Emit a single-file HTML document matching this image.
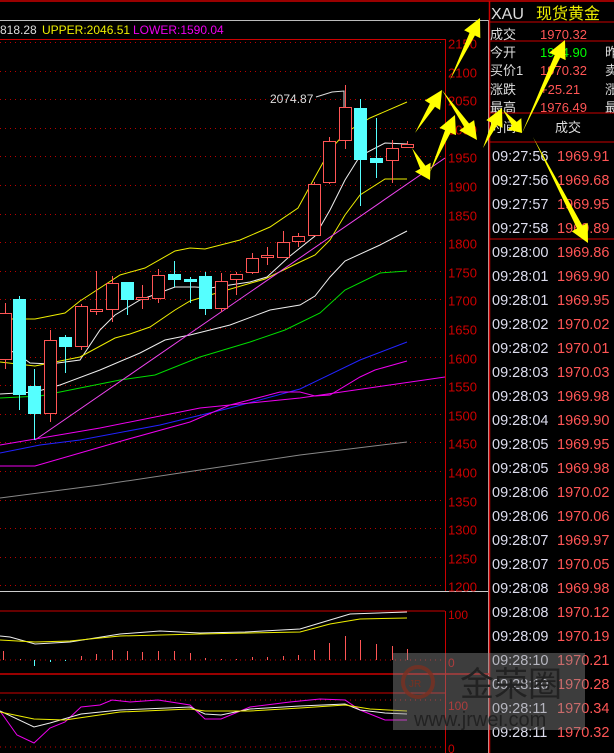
<!DOCTYPE html>
<html><head><meta charset="utf-8"><style>
html,body{margin:0;padding:0;background:#000;width:614px;height:753px;overflow:hidden}
svg{display:block}
text{font-family:"Liberation Sans","Noto Sans CJK SC",sans-serif}
</style></head><body>
<svg id="s" width="614" height="753" xmlns="http://www.w3.org/2000/svg">
<rect width="614" height="753" fill="#000"/>
<line x1="0" y1="1" x2="614" y2="1" stroke="#c00" stroke-width="1.5"/>
<line x1="0" y1="20.5" x2="488" y2="20.5" stroke="#bbb"/>
<line x1="488.5" y1="20" x2="488.5" y2="753" stroke="#bbb"/>
<line x1="0" y1="39.5" x2="445" y2="39.5" stroke="#c00"/>
<text x="0" y="34" font-size="12" fill="#ddd">818.28</text>
<text x="42" y="34" font-size="12" fill="#ee0">UPPER:2046.51</text>
<text x="133" y="34" font-size="12" fill="#e0e">LOWER:1590.04</text>
<line x1="445.5" y1="39" x2="445.5" y2="591" stroke="#c00"/>
<line x1="0" y1="591.5" x2="488" y2="591.5" stroke="#ccc"/>
<g id="grid"></g>
<g id="lines" fill="none" stroke-width="1"></g>
<g id="candles"></g>
<text x="270" y="103" font-size="12" fill="#ddd">2074.87</text>
<polyline points="316,97 332,92 344,91 344,107" fill="none" stroke="#ddd"/>
<line x1="0" y1="611" x2="445" y2="611" stroke="#c00"/>
<line x1="0" y1="674" x2="489" y2="674" stroke="#c00" stroke-width="1.5"/>
<line x1="0" y1="693" x2="445" y2="693" stroke="#c00"/>
<line x1="445.5" y1="611" x2="445.5" y2="753" stroke="#c00"/>
<line x1="0" y1="660" x2="445" y2="660" stroke="#c00" stroke-dasharray="1,4"/>
<line x1="0" y1="700" x2="445" y2="700" stroke="#c00" stroke-dasharray="1,4"/>
<line x1="0" y1="747" x2="445" y2="747" stroke="#c00" stroke-dasharray="1,4"/>
<text x="448" y="619" font-size="12" fill="#c00">100</text>
<text x="448" y="667" font-size="12" fill="#c00">0</text>
<text x="448" y="710" font-size="12" fill="#c00">100</text>
<text x="448" y="753" font-size="12" fill="#c00">0</text>
<g id="low" fill="none"></g>
<line x1="489.5" y1="1" x2="489.5" y2="753" stroke="#c00" stroke-width="1.5"/>
<text x="491" y="19" font-size="16" fill="#ddd">XAU</text>
<text x="536" y="19" font-size="16" fill="#ee0">现货黄金</text>
<line x1="489" y1="22" x2="614" y2="22" stroke="#c00"/>
<text x="490" y="39" font-size="13" fill="#ddd">成交</text>
<text x="540" y="39" font-size="13" fill="#f55">1970.32</text>
<line x1="489" y1="41" x2="614" y2="41" stroke="#c00"/>
<text x="490" y="57" font-size="13" fill="#ddd">今开</text>
<text x="540" y="57" font-size="13" fill="#0f0">1944.90</text>
<text x="605" y="57" font-size="13" fill="#ddd">昨</text>
<text x="490" y="75" font-size="13" fill="#ddd">买价1</text>
<text x="540" y="75" font-size="13" fill="#f55">1970.32</text>
<text x="605" y="75" font-size="13" fill="#ddd">卖</text>
<text x="490" y="94" font-size="13" fill="#ddd">涨跌</text>
<text x="540" y="94" font-size="13" fill="#f55">+25.21</text>
<text x="605" y="94" font-size="13" fill="#ddd">涨</text>
<text x="490" y="112" font-size="13" fill="#ddd">最高</text>
<text x="540" y="112" font-size="13" fill="#f55">1976.49</text>
<text x="605" y="112" font-size="13" fill="#ddd">最</text>
<line x1="489" y1="113" x2="614" y2="113" stroke="#c00"/>
<text x="490" y="132" font-size="13" fill="#ddd">时间</text>
<text x="555" y="132" font-size="13" fill="#ddd">成交</text>
<line x1="489" y1="142" x2="614" y2="142" stroke="#c00"/>
<line x1="489" y1="239" x2="614" y2="239" stroke="#c00"/>
<g id="ticks"></g>
<rect x="393" y="653" width="192" height="77" fill="#888" opacity="0.45"/>
<circle cx="418" cy="682" r="15" fill="none" stroke="#7a3020" stroke-width="4" opacity="0.8"/>
<text x="409" y="687" font-size="10" fill="#7a3020">JR</text>
<text x="460" y="696" font-size="34" fill="#222" font-family="Noto Sans CJK SC,sans-serif">金荣圈</text>
<text x="414" y="726" font-size="20" fill="#222">www.jrwei.com</text>
<g id="arrows" fill="#ff0"></g>
</svg>
<script>
var NS="http://www.w3.org/2000/svg";
function el(p,t,a){var e=document.createElementNS(NS,t);for(var k in a)e.setAttribute(k,a[k]);document.getElementById(p).appendChild(e);return e;}
function Y(v){return 185+(1900-v)*0.572;}
for(var v=2150;v>=1200;v-=50){var y=Math.round(Y(v))+0.5;el("grid","line",{x1:0,y1:y,x2:445,y2:y,stroke:"#b00","stroke-dasharray":"1,4"});
var t=el("grid","text",{x:448,y:y+6,"font-size":13,fill:"#c00"});t.textContent=v;}
function pl(g,pts,c,w){el(g,"polyline",{points:pts,stroke:c,"stroke-width":w||1,fill:"none"});}
pl("lines","0,319 35,319 65,313 80,301 120,275 145,268 175,251 190,248 205,249 240,240 270,227 298,208 315,177 330,150 345,133 370,118 407,102","#ee0");
pl("lines","0,350 15,352 30,363 50,364 80,360 100,330 115,315 140,300 175,287 195,287 210,288 250,282 267,277 290,256 315,236 330,210 345,180 360,156 385,143 407,144","#eee");
pl("lines","0,362 35,366 80,357 115,338 130,334 150,327 175,310 190,301 210,295 265,279 300,262 315,255 330,240 345,215 360,195 385,179 407,179","#ee0");
pl("lines","0,394 35,392 60,385 100,370 140,353 165,340 190,335 230,325 270,310 300,305 315,296 330,277 345,261 380,245 407,231","#eee");
pl("lines","0,398 40,396 80,388 120,380 155,375 200,357 250,342 285,330 320,313 345,290 380,273 407,271","#0d0");
pl("lines","0,453 40,445 80,440 160,425 230,408 300,389 360,360 407,342","#22f");
pl("lines","35,440 445,158","#e4e");
pl("lines","0,466 35,466 125,440 190,422 230,405 265,396 280,392 300,392 315,396 330,395 360,377 375,370 407,361","#e0e");
pl("lines","0,445 100,428 200,408 300,398 445,377","#e0e");
pl("lines","0,498 100,485 200,470 300,455 407,442","#888");
var C=[[5,313,359,303,369,1],[19,299,394,296,410,0],[34,386,413,369,440,0],[50,340,413,330,422,1],[65,337,346,335,373,0],[81,306,346,304,350,1],[96,309,311,271,315,1],[112,283,309,276,322,1],[127,282,299,282,315,0],[142,297,299,285,309,1],[158,275,298,269,303,1],[174,274,279,261,287,0],[190,279,281,277,303,0],[205,276,308,272,315,0],[221,281,308,273,312,1],[236,274,279,272,295,1],[252,258,272,253,274,1],[267,255,257,247,265,1],[283,242,257,231,258,1],[298,236,241,233,247,1],[314,184,235,182,235,1],[329,141,182,137,184,1],[345,107,140,85,149,1],[360,108,159,99,206,0],[376,158,162,118,178,0],[392,148,160,140,183,1],[407,144,147,141,147,1]];
C.forEach(function(c){var col=c[5]?"#f55":"#5ff";el("candles","line",{x1:c[0]+.5,y1:c[3],x2:c[0]+.5,y2:c[4],stroke:col});
var h=Math.max(c[2]-c[1],1);
if(c[5])el("candles","rect",{x:c[0]-5.5,y:c[1]+.5,width:12,height:h,fill:"#000",stroke:col});
else el("candles","rect",{x:c[0]-6,y:c[1],width:13,height:h+1,fill:col});});
var V=[[3,651],[20,659],[34,666],[50,662],[65,661],[81,656],[96,654],[112,650],[127,651],[142,652],[158,651],[174,651],[190,653],[205,658],[221,659],[236,659],[252,657],[267,657],[283,656],[298,655],[314,650],[329,643],[345,636],[360,640],[376,644],[392,646],[407,649]];
V.forEach(function(b){el("low","line",{x1:b[0]+.5,y1:660,x2:b[0]+.5,y2:b[1],stroke:b[1]>660?"#5ff":"#f55"});});
pl("low","0,636 10,637 35,644 70,642 120,634 160,631 200,633 245,632 300,629 330,620 350,614 407,612","#eee");
pl("low","0,640 35,642 70,641 120,636 200,634 300,632 330,624 360,619 407,618","#ee0");
pl("low","0,711 17,735 34,743 50,728 65,722 81,707 100,705 112,700 130,702 158,700 190,705 205,719 221,719 250,707 290,702 320,699 345,700 360,710 385,720 407,720","#e0e");
pl("low","0,711 34,727 50,723 81,714 120,710 190,707 205,714 221,715 250,709 300,706 345,704 360,710 385,713 407,714","#eee");
pl("low","0,712 34,719 65,720 120,712 190,709 205,711 250,711 300,708 345,705 370,709 407,711","#ee0");
var T=[["09:27:56","1969.91"],["09:27:56","1969.68"],["09:27:57","1969.95"],["09:27:58","1969.89"],["09:28:00","1969.86"],["09:28:01","1969.90"],["09:28:01","1969.95"],["09:28:02","1970.02"],["09:28:02","1970.01"],["09:28:03","1970.03"],["09:28:03","1969.98"],["09:28:04","1969.90"],["09:28:05","1969.95"],["09:28:05","1969.98"],["09:28:06","1970.02"],["09:28:06","1970.06"],["09:28:07","1969.97"],["09:28:07","1970.05"],["09:28:08","1969.98"],["09:28:08","1970.12"],["09:28:09","1970.19"],["09:28:10","1970.21"],["09:28:10","1970.28"],["09:28:11","1970.34"],["09:28:11","1970.32"]];
T.forEach(function(r,i){var y=161+i*24;var a=el("ticks","text",{x:492,y:y,"font-size":14.5,fill:"#dde"});a.textContent=r[0];
var b=el("ticks","text",{x:557,y:y,"font-size":14.5,fill:"#f55"});b.textContent=r[1];});
function arrow(tx,ty,px,py){var dx=px-tx,dy=py-ty,L=Math.sqrt(dx*dx+dy*dy),ux=dx/L,uy=dy/L,nx=-uy,ny=ux;var hl=Math.min(18,L*0.4);var bx=px-ux*hl,by=py-uy*hl;
var p=[[tx,ty],[bx+nx*3,by+ny*3],[bx+nx*9,by+ny*9],[px,py],[bx-nx*9,by-ny*9],[bx-nx*3,by-ny*3]];
el("arrows","polygon",{points:p.map(function(q){return q[0].toFixed(1)+","+q[1].toFixed(1)}).join(" ")});}
arrow(450,80,480,18);arrow(415,133,442,90);arrow(442,90,477,140);arrow(412,148,430,180);arrow(430,172,455,115);
arrow(483,148,502,108);arrow(503,110,522,133);arrow(522,133,565,40);arrow(533,137,588,243);
</script>
</body></html>
